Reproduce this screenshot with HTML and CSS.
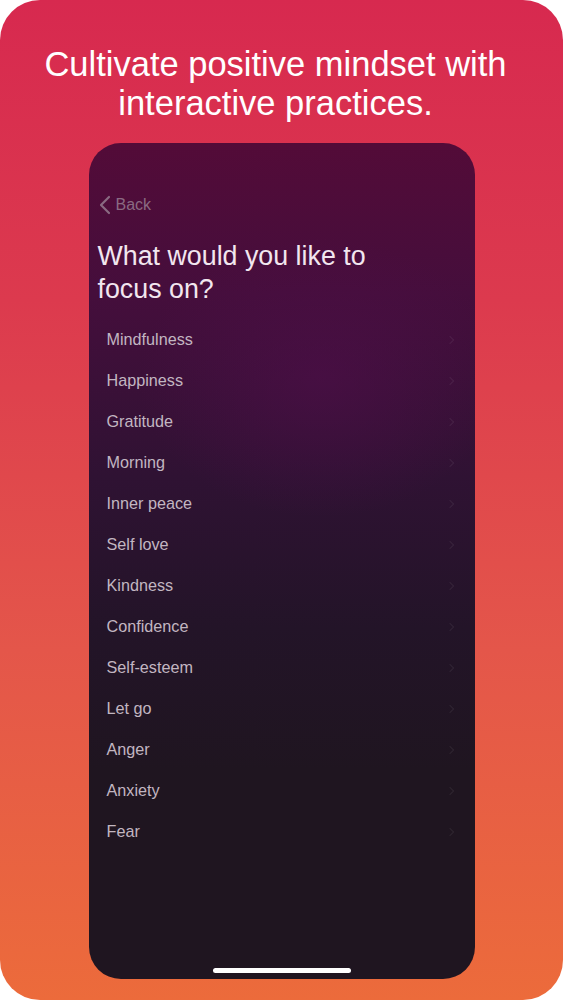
FILE: index.html
```html
<!DOCTYPE html>
<html>
<head>
<meta charset="utf-8">
<link rel="stylesheet" href="styles.css">
</head>
<body>
<div class="card">
  <h1 class="headline">Cultivate positive mindset with<br>interactive practices.</h1>
  <div class="phone">
    <div class="nav">
      <svg class="back-icon" width="12" height="20" viewBox="0 0 12 20"><path d="M10 2 L2 10 L10 18" fill="none" stroke="currentColor" stroke-width="2.2" stroke-linecap="round" stroke-linejoin="round"/></svg>
      <span>Back</span>
    </div>
    <h2 class="title">What would you like to<br>focus on?</h2>
    <ul class="list">
      <li>Mindfulness<span class="chev"></span></li>
      <li>Happiness<span class="chev"></span></li>
      <li>Gratitude<span class="chev"></span></li>
      <li>Morning<span class="chev"></span></li>
      <li>Inner peace<span class="chev"></span></li>
      <li>Self love<span class="chev"></span></li>
      <li>Kindness<span class="chev"></span></li>
      <li>Confidence<span class="chev"></span></li>
      <li>Self-esteem<span class="chev"></span></li>
      <li>Let go<span class="chev"></span></li>
      <li>Anger<span class="chev"></span></li>
      <li>Anxiety<span class="chev"></span></li>
      <li>Fear<span class="chev"></span></li>
    </ul>
    <div class="home-bar"></div>
  </div>
</div>
</body>
</html>
```

FILE: styles.css
```css
html, body {
  margin: 0;
  padding: 0;
  background: #ffffff;
}
body {
  font-family: "Liberation Sans", Arial, sans-serif;
}
.card {
  width: 563px;
  height: 1000px;
  border-radius: 40px;
  background: linear-gradient(180deg, #d7294f 0%, #dc3a4e 30%, #e4564a 65%, #ec6b3b 100%);
  box-sizing: border-box;
  padding-top: 45px;
  display: flex;
  flex-direction: column;
  align-items: center;
  overflow: hidden;
}
.headline {
  margin: 0;
  padding-right: 12px;
  color: #ffffff;
  font-weight: 400;
  font-size: 34.5px;
  line-height: 38.5px;
  text-align: center;
}
.phone {
  margin-top: 21px;
  width: 386px;
  height: 836px;
  border-radius: 32px;
  background:
    radial-gradient(ellipse 260px 200px at 60% 28%, rgba(80,14,75,0.55), rgba(80,14,75,0) 70%),
    linear-gradient(180deg, #530b38 0%, #450e3c 18%, #2f1233 40%, #231428 58%, #1f1520 75%, #1f1520 100%);
  display: flex;
  flex-direction: column;
  box-sizing: border-box;
  padding: 50px 0 0 10px;
  position: relative;
}
.nav {
  display: flex;
  align-items: center;
  gap: 5px;
  color: #8a6a82;
  font-size: 16px;
  height: 24px;
}
.back-icon {
  color: #8a6a82;
}
.title {
  margin: 23px 0 0 -1px;
  color: #f2e6ef;
  font-weight: 400;
  font-size: 26.8px;
  line-height: 33px;
}
.list {
  list-style: none;
  margin: 13px 0 0 0;
  padding: 0;
}
.list li {
  height: 41px;
  display: flex;
  align-items: center;
  justify-content: space-between;
  padding: 0 22px 0 8px;
  color: #c2b6c1;
  font-size: 16.2px;
}
.chev {
  width: 5px;
  height: 5px;
  border-top: 1.5px solid rgba(255,255,255,0.07);
  border-right: 1.5px solid rgba(255,255,255,0.07);
  transform: rotate(45deg);
}
.home-bar {
  position: absolute;
  left: 124px;
  bottom: 6px;
  width: 138px;
  height: 5px;
  border-radius: 3px;
  background: #ffffff;
}
```
